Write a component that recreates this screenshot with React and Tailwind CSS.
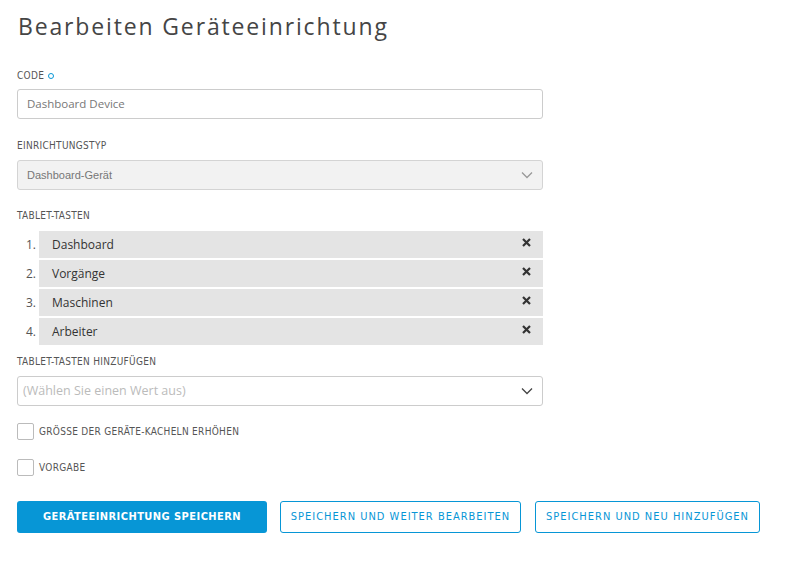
import React from 'react';

const Chevron = ({ className = '' }) => (
  <svg className={className} width="12" height="8" viewBox="0 0 12 8" fill="none">
    <path d="M1 1.5l5 5 5-5" stroke="currentColor" strokeWidth="1.3" />
  </svg>
);

const Label = ({ children }) => (
  <div className="text-[10px] tracking-[0.3px] text-[#555] uppercase font-['DejaVu_Sans_Condensed','DejaVu_Sans',sans-serif] font-stretch-condensed leading-none">
    {children}
  </div>
);

const buttons = ['Dashboard', 'Vorgänge', 'Maschinen', 'Arbeiter'];

const btnText =
  "h-[32px] rounded-[3px] text-[11px] uppercase whitespace-nowrap font-['DejaVu_Sans_Condensed','DejaVu_Sans',sans-serif] font-stretch-condensed";

export default function App() {
  return (
    <div className="min-h-[580px] w-[785px] bg-white pl-[17px] pt-[12px] font-['Open_Sans',sans-serif]">
      <h1 className="text-[23px] leading-[28px] tracking-[1.85px] text-[#454545] font-normal ml-px">
        Bearbeiten Geräteeinrichtung
      </h1>

      <div className="mt-[31px] flex items-center gap-[4px]">
        <Label>Code</Label>
        <span className="w-[6px] h-[6px] rounded-full border-[1.5px] border-[#0796d6]" />
      </div>
      <div className="mt-[8px] w-[526px] h-[30px] border border-[#ccc] rounded-[3px] flex items-center px-[9px] text-[11.5px] text-[#777]">
        Dashboard Device
      </div>

      <div className="mt-[22px]">
        <Label>Einrichtungstyp</Label>
      </div>
      <div className="mt-[9px] w-[526px] h-[30px] border border-[#d4d4d4] bg-[#f2f2f2] rounded-[3px] flex items-center justify-between pl-[9px] pr-[9px] text-[11px] text-[#777] font-['Liberation_Sans',sans-serif]">
        <span>Dashboard-Gerät</span>
        <Chevron className="text-[#999]" />
      </div>

      <div className="mt-[21px]">
        <Label>Tablet-Tasten</Label>
      </div>
      <div className="mt-[10px] flex flex-col gap-[2px] w-[526px]">
        {buttons.map((b, i) => (
          <div key={b} className="flex items-center">
            <span className="w-[22px] text-right pr-[3px] text-[12px] text-[#555]">{i + 1}.</span>
            <div className="flex-1 h-[27px] bg-[#e4e4e4] flex items-center justify-between pl-[13px] pr-[12px] text-[12px] text-[#333]">
              <span>{b}</span>
              <svg width="9" height="9" viewBox="0 0 9 9" className="-mt-[4px]">
                <path d="M1 1l7 7M8 1L1 8" stroke="#333" strokeWidth="2.2" />
              </svg>
            </div>
          </div>
        ))}
      </div>

      <div className="mt-[12px]">
        <Label>Tablet-Tasten hinzufügen</Label>
      </div>
      <div className="mt-[9px] w-[526px] h-[30px] border border-[#ccc] rounded-[3px] flex items-center justify-between pl-[5px] pr-[9px] text-[12.5px] text-[#bbb]">
        <span>(Wählen Sie einen Wert aus)</span>
        <Chevron className="text-[#444]" />
      </div>

      <div className="mt-[17px] flex items-center gap-[5px]">
        <span className="w-[17px] h-[17px] border border-[#bbb] rounded-[2px]" />
        <Label>Grösse der Geräte-Kacheln erhöhen</Label>
      </div>
      <div className="mt-[19px] flex items-center gap-[5px]">
        <span className="w-[17px] h-[17px] border border-[#bbb] rounded-[2px]" />
        <Label>Vorgabe</Label>
      </div>

      <div className="mt-[25px] flex items-center gap-[12px]">
        <button className={`${btnText} tracking-[0.45px] w-[250px] bg-[#0796d6] text-white font-bold`}>
          Geräteeinrichtung speichern
        </button>
        <button className={`${btnText} tracking-[1px] ml-px w-[241px] border border-[#0796d6] text-[#0796d6]`}>
          Speichern und weiter bearbeiten
        </button>
        <button className={`${btnText} tracking-[1px] ml-[2px] w-[225px] border border-[#0796d6] text-[#0796d6]`}>
          Speichern und neu hinzufügen
        </button>
      </div>
    </div>
  );
}
